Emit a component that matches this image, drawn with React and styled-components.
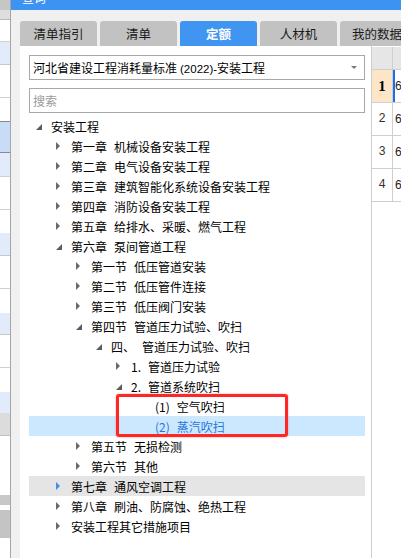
import React from 'react'
import styled, { createGlobalStyle } from 'styled-components'

const GlobalStyle = createGlobalStyle`
  html, body {
    margin: 0;
    padding: 0;
  }
  body {
    width: 401px;
    height: 558px;
    overflow: hidden;
    background: #fff;
    font-family: "Noto Sans CJK SC", "Noto Sans", sans-serif;
    font-size: 12px;
    color: #000;
  }
  * {
    box-sizing: border-box;
  }
`

const Page = styled.div`
    display: flex;
    width: 401px;
    height: 558px;
    overflow: hidden;
`

const Strip = styled.div`
    width: 11px;
    flex-shrink: 0;
    border-right: 1px solid #a6a6a6;
    display: flex;
    flex-direction: column;
    overflow: hidden;
`

const StripRow = styled.div`
    flex-shrink: 0;
    height: ${props => props.h}px;
    background: ${props => props.bg};
    border-bottom: ${props => props.line ? `1px solid ${props.line}` : 'none'};
`

const Dialog = styled.div`
    flex: 1;
    min-width: 0;
    display: flex;
    flex-direction: column;
    background: #f0f0f0;
`

const TitleBar = styled.div`
    height: 10px;
    flex-shrink: 0;
    background: #3d93f2;
    overflow: hidden;
    padding-left: 11px;
`

const TitleText = styled.div`
    margin-top: -9px;
    color: #fff;
    font-size: 12px;
    line-height: 14px;
`

const Body = styled.div`
    flex: 1;
    min-height: 0;
    display: flex;
    flex-direction: column;
    padding: 11px 0 0 9px;
    overflow: hidden;
`

const Tabs = styled.div`
    display: flex;
    gap: 3px;
    height: 25px;
    flex-shrink: 0;
`

const Tab = styled.div`
    width: 77px;
    flex-shrink: 0;
    border-radius: 3px 3px 0 0;
    background: ${props => props.active ? '#3f95f0' : '#c2c2c2'};
    color: ${props => props.active ? '#fff' : '#1a1a1a'};
    font-weight: ${props => props.active ? 700 : 400};
    font-size: 12.5px;
    display: flex;
    align-items: center;
    justify-content: ${props => props.clip ? 'flex-start' : 'center'};
    padding-left: ${props => props.clip ? '12px' : '0'};
    white-space: nowrap;
    overflow: hidden;
`

const Panel = styled.div`
    flex: 1;
    min-height: 0;
    display: flex;
    background: #fff;
`

const TreePane = styled.div`
    width: 352px;
    flex-shrink: 0;
    border-right: 1px solid #cfcfcf;
    padding: 9px 6px 0 9px;
    display: flex;
    flex-direction: column;
`

const Select = styled.div`
    height: 25px;
    border: 1px solid #a8a8a8;
    display: flex;
    align-items: center;
    justify-content: space-between;
    padding: 0 7px 0 3px;
    white-space: nowrap;
`

const Latin = styled.span`
    margin-left: 3px;
    font-family: "Liberation Sans", sans-serif;
    font-size: 11.5px;
`

const Caret = styled.span`
    width: 0;
    height: 0;
    border-left: 3px solid transparent;
    border-right: 3px solid transparent;
    border-top: 3px solid #7a7a7a;
`

const Search = styled.div`
    height: 25px;
    margin-top: 8px;
    border: 1px solid #a8a8a8;
    display: flex;
    align-items: center;
    padding-left: 3px;
    color: #9a9a9a;
`

const Tree = styled.div`
    position: relative;
    margin-top: 3px;
`

const Row = styled.div`
    height: 20px;
    display: flex;
    align-items: center;
    padding-left: ${props => 7 + props.level * 20}px;
    background: ${props => props.selected ? '#cce8ff' : props.hover ? '#e5e5e5' : 'transparent'};
    color: ${props => props.selected ? '#2475de' : '#000'};
    white-space: nowrap;
`

const Toggle = styled.span`
    width: ${props => props.leaf ? 19 : 15}px;
    flex-shrink: 0;
    display: flex;
    align-items: center;
    height: 20px;
    padding-top: ${props => props.open ? 2 : 0}px;
`

const Prefix = styled.span`
    margin-right: 7px;
`

const Marker = styled.div`
    position: absolute;
    left: 87px;
    top: 278px;
    width: 172px;
    height: 43px;
    border: 3px solid #ff2626;
    border-radius: 3px;
    box-shadow: 0 0 2px rgba(255, 60, 60, 0.6);
    pointer-events: none;
`

const GridPane = styled.div`
    flex: 1;
    min-width: 0;
    overflow: hidden;
    padding-top: 1px;
`

const GridHeader = styled.div`
    height: 23px;
    display: flex;
    background: #e6e6e6;
    border-bottom: 1px solid #cfcfcf;
`

const HeadNum = styled.div`
    width: 21px;
    flex-shrink: 0;
    border-right: 1px solid #cfcfcf;
`

const GridRow = styled.div`
    height: 33px;
    display: flex;
    border-bottom: 1px solid #cfcfcf;
`

const RowNum = styled.div`
    width: 21px;
    flex-shrink: 0;
    border-right: 1px solid #cfcfcf;
    background: ${props => props.active ? '#fde5c8' : '#fff'};
    display: flex;
    align-items: center;
    justify-content: center;
    font-family: ${props => props.active ? '"Liberation Serif", serif' : '"Liberation Mono", monospace'};
    font-weight: ${props => props.active ? 700 : 400};
    font-size: ${props => props.active ? 15 : 12}px;
    color: ${props => props.active ? '#000' : '#333'};
`

const Cell = styled.div`
    flex: 1;
    display: flex;
    align-items: center;
    padding-left: ${props => props.active ? 0 : 2}px;
    border-left: ${props => props.active ? '2px solid #1a6ef5' : 'none'};
    font-family: "Liberation Sans", sans-serif;
    font-size: 12px;
    color: #222;
`

const strip = [
    [10, '#c6c6c6'], [10, '#dedede', '#b8b8b8'], [22, '#fff', '#d0d0d0'],
    [23, '#e1ebfb', '#c8c8c8'], [33, '#fff', '#d0d0d0'], [24, '#fff', '#8a8a8a'],
    [31, '#c9dcf7', '#8a8a8a'], [24, '#e1ebfb', '#d0d0d0'], [33, '#fff', '#d0d0d0'],
    [23, '#fff'], [23, '#e1ebfb', '#c8c8c8'], [33, '#fff', '#d0d0d0'],
    [24, '#fff'], [22, '#e1ebfb', '#c8c8c8'], [33, '#fff', '#d0d0d0'],
    [24, '#fff'], [21, '#e1ebfb'], [23, '#dcdcdc', '#c0c0c0'],
    [59, '#fff'], [10, '#c8c8c8'], [5, '#fff'], [28, '#c4c4c4'], [20, '#fff'],
]

const tabs = ['清单指引', '清单', '定额', '人材机', '我的数据']

const rows = [
    { l: 0, t: 'open', p: '', s: '安装工程' },
    { l: 1, t: 'closed', p: '第一章', s: '机械设备安装工程' },
    { l: 1, t: 'closed', p: '第二章', s: '电气设备安装工程' },
    { l: 1, t: 'closed', p: '第三章', s: '建筑智能化系统设备安装工程' },
    { l: 1, t: 'closed', p: '第四章', s: '消防设备安装工程' },
    { l: 1, t: 'closed', p: '第五章', s: '给排水、采暖、燃气工程' },
    { l: 1, t: 'open', p: '第六章', s: '泵间管道工程' },
    { l: 2, t: 'closed', p: '第一节', s: '低压管道安装' },
    { l: 2, t: 'closed', p: '第二节', s: '低压管件连接' },
    { l: 2, t: 'closed', p: '第三节', s: '低压阀门安装' },
    { l: 2, t: 'open', p: '第四节', s: '管道压力试验、吹扫' },
    { l: 3, t: 'open', p: '四、', s: '管道压力试验、吹扫' },
    { l: 4, t: 'closed', p: '1.', s: '管道压力试验' },
    { l: 4, t: 'open', p: '2.', s: '管道系统吹扫' },
    { l: 5, p: '(1)', s: '空气吹扫' },
    { l: 5, p: '(2)', s: '蒸汽吹扫', selected: true },
    { l: 2, t: 'closed', p: '第五节', s: '无损检测' },
    { l: 2, t: 'closed', p: '第六节', s: '其他' },
    { l: 1, t: 'closed', p: '第七章', s: '通风空调工程', hover: true },
    { l: 1, t: 'closed', p: '第八章', s: '刷油、防腐蚀、绝热工程' },
    { l: 1, t: 'closed', p: '', s: '安装工程其它措施项目' },
]

const Arrow = ({ open, color }) => open ? (
    <svg width="6" height="6" viewBox="0 0 6 6">
        <path d="M6 0 L6 6 L0 6 Z" fill="#5c5c5c" />
    </svg>
) : (
    <svg width="4" height="8" viewBox="0 0 4 8">
        <path d="M0 0 L4 4 L0 8 Z" fill={color} />
    </svg>
)

const TreeRow = ({ row }) => (
    <Row level={row.l} selected={row.selected} hover={row.hover}>
        <Toggle leaf={!row.t} open={row.t === 'open'}>
            {row.t && <Arrow open={row.t === 'open'} color={row.hover ? '#3d8fe8' : '#6a6a6a'} />}
        </Toggle>
        {row.p && <Prefix>{row.p}</Prefix>}
        <span>{row.s}</span>
    </Row>
)

export default function App() {
    return (
        <Page>
            <GlobalStyle />
            <Strip>
                {strip.map(([h, bg, line], i) => (
                    <StripRow key={i} h={h} bg={bg} line={line} />
                ))}
            </Strip>
            <Dialog>
                <TitleBar>
                    <TitleText>查询</TitleText>
                </TitleBar>
                <Body>
                    <Tabs>
                        {tabs.map((t, i) => (
                            <Tab key={t} active={i === 2} clip={i === 4}>{t}</Tab>
                        ))}
                    </Tabs>
                    <Panel>
                        <TreePane>
                            <Select>
                                <span>河北省建设工程消耗量标准<Latin>(2022)-</Latin>安装工程</span>
                                <Caret />
                            </Select>
                            <Search>搜索</Search>
                            <Tree>
                                {rows.map((r, i) => <TreeRow key={i} row={r} />)}
                                <Marker />
                            </Tree>
                        </TreePane>
                        <GridPane>
                            <GridHeader>
                                <HeadNum />
                            </GridHeader>
                            {[1, 2, 3, 4].map(n => (
                                <GridRow key={n}>
                                    <RowNum active={n === 1}>{n}</RowNum>
                                    <Cell active={n === 1}>6</Cell>
                                </GridRow>
                            ))}
                        </GridPane>
                    </Panel>
                </Body>
            </Dialog>
        </Page>
    )
}
